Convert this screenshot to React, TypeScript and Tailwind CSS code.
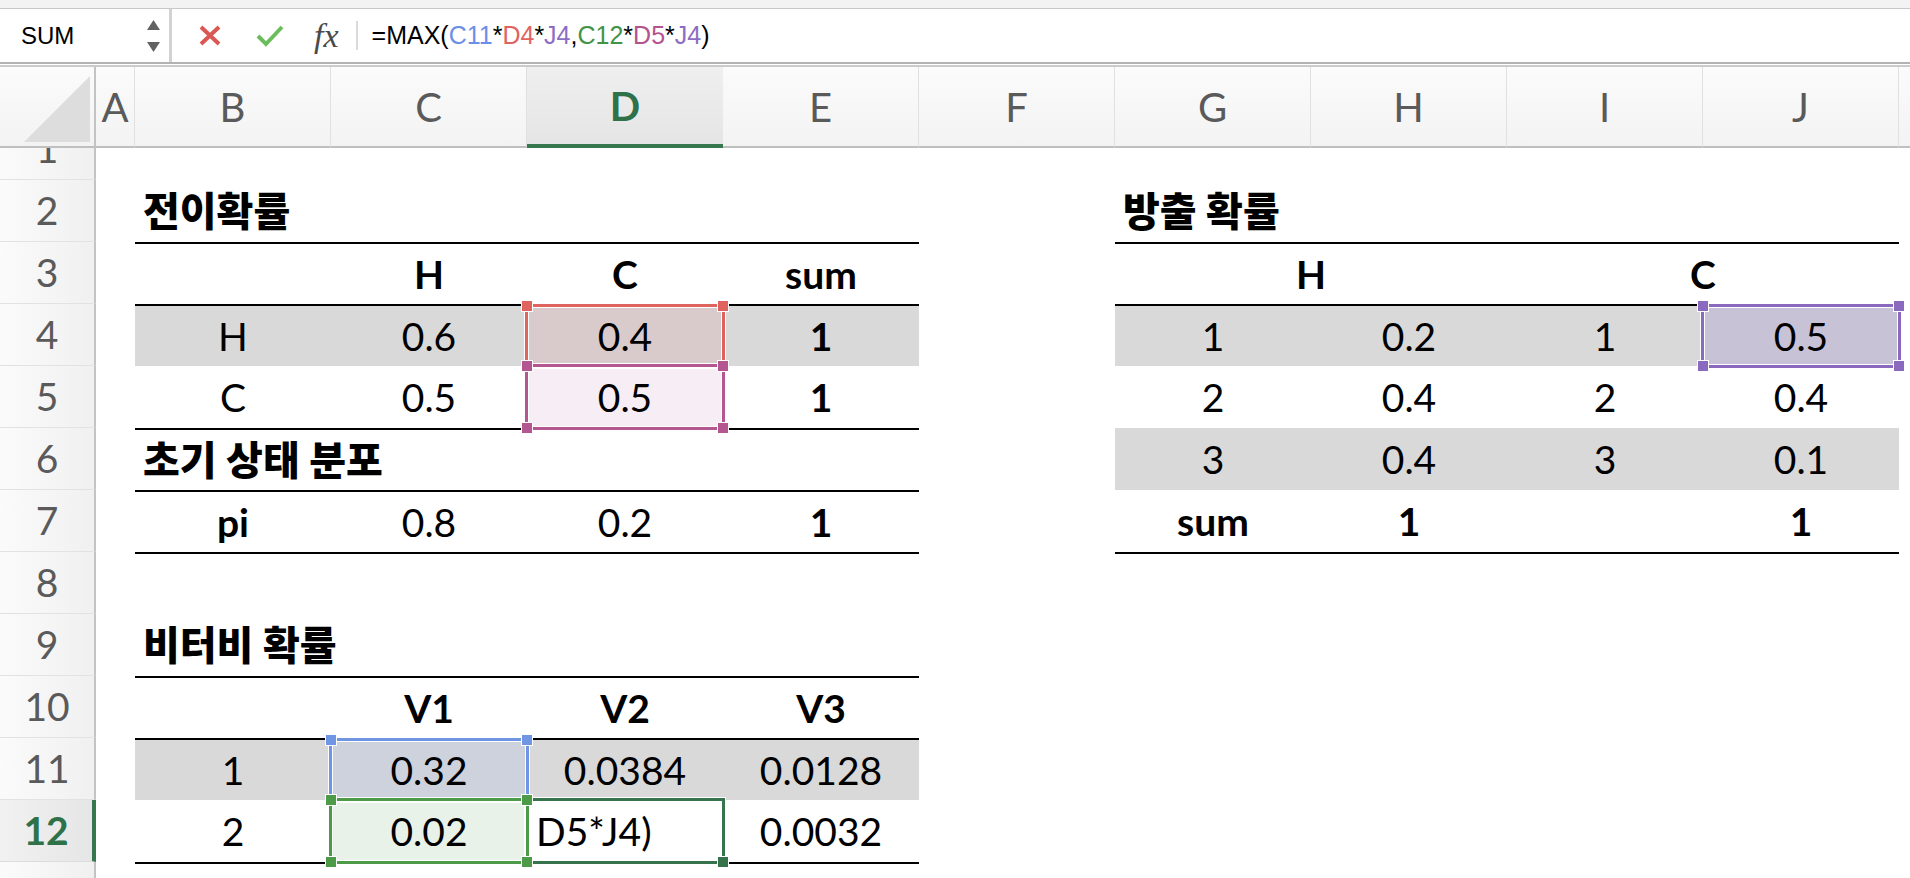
import clsx from 'clsx';

type Sel = 'blue' | 'red' | 'magenta' | 'purple' | 'green' | 'active';

type Cell = {
  v?: string;
  b?: boolean;
  left?: boolean;
  span?: boolean;
  sel?: Sel;
};

type RowSpec = {
  n: number;
  rules?: string[];
  grays?: string[];
  cells: Record<string, Cell>;
};

const COLS = ['A', 'B', 'C', 'D', 'E', 'F', 'G', 'H', 'I', 'J'];
const GRID = 'grid grid-cols-[96px_39px_repeat(9,196px)_1fr]';
const T1 = ['B', 'C', 'D', 'E'];
const T2 = ['G', 'H', 'I', 'J'];

const SEL: Record<Sel, { fill: string; border: string; dot: string }> = {
  blue: { fill: 'bg-[#cdd2dd]', border: 'border-[#7095e3]', dot: 'bg-[#7095e3]' },
  red: { fill: 'bg-[#d9cbcb]', border: 'border-[#df6460]', dot: 'bg-[#df6460]' },
  magenta: { fill: 'bg-[#f7edf4]', border: 'border-[#b4568f]', dot: 'bg-[#b4568f]' },
  purple: { fill: 'bg-[#c8c2d7]', border: 'border-[#8b69bf]', dot: 'bg-[#8b69bf]' },
  green: { fill: 'bg-[#e9f2e8]', border: 'border-[#4d9a48]', dot: 'bg-[#4d9a48]' },
  active: { fill: 'bg-white', border: 'border-[#37734d]', dot: 'bg-[#37734d]' },
};

const rows: RowSpec[] = [
  { n: 1, cells: {} },
  {
    n: 2,
    cells: {
      B: { v: '전이확률', b: true, left: true },
      G: { v: '방출 확률', b: true, left: true },
    },
  },
  {
    n: 3,
    rules: [...T1, ...T2],
    cells: {
      C: { v: 'H', b: true },
      D: { v: 'C', b: true },
      E: { v: 'sum', b: true },
      G: { v: 'H', b: true, span: true },
      I: { v: 'C', b: true, span: true },
    },
  },
  {
    n: 4,
    rules: [...T1, ...T2],
    grays: [...T1, ...T2],
    cells: {
      B: { v: 'H' },
      C: { v: '0.6' },
      D: { v: '0.4', sel: 'red' },
      E: { v: '1', b: true },
      G: { v: '1' },
      H: { v: '0.2' },
      I: { v: '1' },
      J: { v: '0.5', sel: 'purple' },
    },
  },
  {
    n: 5,
    cells: {
      B: { v: 'C' },
      C: { v: '0.5' },
      D: { v: '0.5', sel: 'magenta' },
      E: { v: '1', b: true },
      G: { v: '2' },
      H: { v: '0.4' },
      I: { v: '2' },
      J: { v: '0.4' },
    },
  },
  {
    n: 6,
    rules: T1,
    grays: T2,
    cells: {
      B: { v: '초기 상태 분포', b: true, left: true },
      G: { v: '3' },
      H: { v: '0.4' },
      I: { v: '3' },
      J: { v: '0.1' },
    },
  },
  {
    n: 7,
    rules: T1,
    cells: {
      B: { v: 'pi', b: true },
      C: { v: '0.8' },
      D: { v: '0.2' },
      E: { v: '1', b: true },
      G: { v: 'sum', b: true },
      H: { v: '1', b: true },
      J: { v: '1', b: true },
    },
  },
  { n: 8, rules: [...T1, ...T2], cells: {} },
  { n: 9, cells: { B: { v: '비터비 확률', b: true, left: true } } },
  {
    n: 10,
    rules: T1,
    cells: {
      C: { v: 'V1', b: true },
      D: { v: 'V2', b: true },
      E: { v: 'V3', b: true },
    },
  },
  {
    n: 11,
    rules: T1,
    grays: T1,
    cells: {
      B: { v: '1' },
      C: { v: '0.32', sel: 'blue' },
      D: { v: '0.0384' },
      E: { v: '0.0128' },
    },
  },
  {
    n: 12,
    cells: {
      B: { v: '2' },
      C: { v: '0.02', sel: 'green' },
      D: { v: 'D5*J4)', left: true, sel: 'active' },
      E: { v: '0.0032' },
    },
  },
  { n: 13, rules: T1, cells: {} },
];

const formula: [string, string][] = [
  ['=MAX(', 'text-black'],
  ['C11', 'text-[#6b8fe8]'],
  ['*', 'text-black'],
  ['D4', 'text-[#e06360]'],
  ['*', 'text-black'],
  ['J4', 'text-[#8d6cc4]'],
  [',', 'text-black'],
  ['C12', 'text-[#3f9447]'],
  ['*', 'text-black'],
  ['D5', 'text-[#b4538e]'],
  ['*', 'text-black'],
  ['J4', 'text-[#8d6cc4]'],
  [')', 'text-black'],
];

function SelBox({ kind }: { kind: Sel }) {
  const s = SEL[kind];
  const handle = clsx('pointer-events-none absolute z-30 size-[12px] border border-white', s.dot);
  return (
    <>
      <div
        className={clsx(
          'pointer-events-none absolute -inset-[2px] border-[3px] shadow-[inset_0_0_0_1px_#fff,0_0_0_1px_#fff]',
          s.border,
          kind === 'active' ? 'z-10' : 'z-20'
        )}
      />
      {kind === 'active' ? (
        <div className={clsx(handle, '-right-[6px] -bottom-[6px]')} />
      ) : (
        <>
          <div className={clsx(handle, '-left-[6px] -top-[6px]')} />
          <div className={clsx(handle, '-right-[6px] -top-[6px]')} />
          <div className={clsx(handle, '-left-[6px] -bottom-[6px]')} />
          <div className={clsx(handle, '-right-[6px] -bottom-[6px]')} />
        </>
      )}
    </>
  );
}

function FormulaBar() {
  return (
    <div className="font-['Liberation_Sans',sans-serif]">
      <div className="h-[9px] border-b border-[#c9c9c9] bg-[#f3f3f3]" />
      <div className="flex h-[53px] items-center bg-white">
        <div className="flex h-full w-[172px] items-center justify-between border-r-[3px] border-[#d2d2d2] pl-[21px] pr-[9px]">
          <span className="text-[24px] leading-none text-black">SUM</span>
          <svg width="13" height="32" viewBox="0 0 13 32">
            <path d="M6.5 0 L13 10 L0 10 Z" fill="#626262" />
            <path d="M0 22 L13 22 L6.5 32 Z" fill="#626262" />
          </svg>
        </div>
        <svg className="ml-[27px]" width="22" height="21" viewBox="0 0 22 21">
          <path d="M2 2 L20 19 M20 2 L2 19" stroke="#db5753" strokeWidth="4" />
        </svg>
        <svg className="ml-[35px]" width="28" height="22" viewBox="0 0 28 22">
          <path d="M2 11 L10 19 L26 2" stroke="#6bbd5c" strokeWidth="4" fill="none" />
        </svg>
        <span className="ml-[30px] font-['Liberation_Serif',serif] text-[34px] italic leading-none text-[#4a4a4a]">
          fx
        </span>
        <div className="ml-[17px] h-[29px] w-[2px] bg-[#dadada]" />
        <div className="ml-[14px] text-[25px] leading-none">
          {formula.map(([t, c], i) => (
            <span key={i} className={c}>
              {t}
            </span>
          ))}
        </div>
      </div>
      <div className="h-[5px] border-t-2 border-b-2 border-t-[#b3b3b3] border-b-[#cbcbcb] bg-white" />
    </div>
  );
}

function ColumnHeader() {
  return (
    <div className={clsx(GRID, 'h-[81px]')}>
      <div className="relative border-r-2 border-b-2 border-r-[#c3c3c3] border-b-[#bfbfbf] bg-linear-to-b from-[#fbfbfb] to-[#f3f3f3]">
        <svg className="absolute left-0 top-0" width="94" height="79" viewBox="0 0 94 79">
          <path d="M24 75 L90 9 L90 75 Z" fill="#dddddd" />
        </svg>
      </div>
      {COLS.map((c) =>
        c === 'D' ? (
          <div
            key={c}
            className="flex items-center justify-center border-b-4 border-[#37774d] bg-linear-to-b from-[#efefef] to-[#e5e5e5] text-[40px] font-bold leading-none text-[#2f7148]"
          >
            {c}
          </div>
        ) : (
          <div
            key={c}
            className="flex items-center justify-center border-r border-b-2 border-r-[#e0e0e0] border-b-[#bfbfbf] bg-linear-to-b from-[#fbfbfb] to-[#f3f3f3] text-[40px] leading-none text-[#5a5a5a]"
          >
            {c}
          </div>
        )
      )}
      <div className="border-b-2 border-[#bfbfbf] bg-linear-to-b from-[#fbfbfb] to-[#f3f3f3]" />
    </div>
  );
}

function RowHead({ n }: { n: number }) {
  const active = n === 12;
  return (
    <div
      className={clsx(
        'flex items-center justify-center border-b text-[39px] leading-none',
        active
          ? 'border-r-4 border-r-[#37774d] border-b-[#dcdcdc] bg-linear-to-r from-[#f1f1f1] to-[#e6e6e6] font-bold text-[#2f7148]'
          : 'border-r-2 border-r-[#c3c3c3] border-b-[#e2e2e2] bg-linear-to-r from-[#fbfbfb] to-[#f0f0f0] text-[#5a5a5a]'
      )}
    >
      {n}
    </div>
  );
}

function Row({ spec }: { spec: RowSpec }) {
  const out = [];
  for (let i = 0; i < COLS.length; i++) {
    const col = COLS[i];
    const cell = spec.cells[col] ?? {};
    const rule = spec.rules?.includes(col);
    const gray = spec.grays?.includes(col);
    const fill = cell.sel ? SEL[cell.sel].fill : gray ? 'bg-[#d9d9d9]' : 'bg-white';
    const title = cell.left && cell.b;
    out.push(
      <div
        key={col}
        className={clsx(
          'relative flex items-center leading-none text-black',
          cell.left ? (cell.sel ? 'justify-start pl-[9px]' : 'justify-start pl-2') : 'justify-center',
          title ? 'text-[40px] font-black' : 'text-[39px]',
          cell.b && !title && 'font-bold',
          rule && 'border-t-2 border-black',
          cell.span && 'col-span-2',
          fill
        )}
      >
        <span className="relative z-[1] whitespace-nowrap">{cell.v}</span>
        {cell.sel && <SelBox kind={cell.sel} />}
      </div>
    );
    if (cell.span) i++;
  }
  return (
    <div className={clsx(GRID, 'h-[62px] shrink-0', spec.n === 1 && '-mt-[30px]')}>
      <RowHead n={spec.n} />
      {out}
      <div className="bg-white" />
    </div>
  );
}

export default function App() {
  return (
    <div className="h-[878px] w-[1910px] overflow-hidden bg-white font-['Lato','Noto_Sans_CJK_KR',sans-serif]">
      <FormulaBar />
      <ColumnHeader />
      <div className="flex h-[730px] flex-col overflow-hidden">
        {rows.map((r) => (
          <Row key={r.n} spec={r} />
        ))}
      </div>
    </div>
  );
}
